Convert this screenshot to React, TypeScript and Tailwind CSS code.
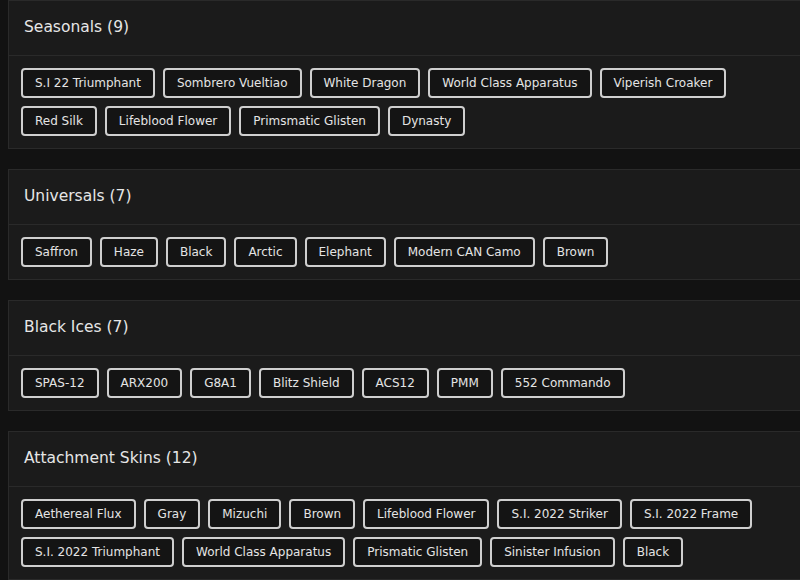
const sections: { title: string; items: string[] }[] = [
  {
    title: 'Seasonals',
    items: [
      'S.I 22 Triumphant',
      'Sombrero Vueltiao',
      'White Dragon',
      'World Class Apparatus',
      'Viperish Croaker',
      'Red Silk',
      'Lifeblood Flower',
      'Primsmatic Glisten',
      'Dynasty',
    ],
  },
  {
    title: 'Universals',
    items: ['Saffron', 'Haze', 'Black', 'Arctic', 'Elephant', 'Modern CAN Camo', 'Brown'],
  },
  {
    title: 'Black Ices',
    items: ['SPAS-12', 'ARX200', 'G8A1', 'Blitz Shield', 'ACS12', 'PMM', '552 Commando'],
  },
  {
    title: 'Attachment Skins',
    items: [
      'Aethereal Flux',
      'Gray',
      'Mizuchi',
      'Brown',
      'Lifeblood Flower',
      'S.I. 2022 Striker',
      'S.I. 2022 Frame',
      'S.I. 2022 Triumphant',
      'World Class Apparatus',
      'Prismatic Glisten',
      'Sinister Infusion',
      'Black',
    ],
  },
]

export default function App() {
  return (
    <div className="min-h-screen bg-[#121212] pl-2 overflow-hidden font-['DejaVu_Sans',sans-serif]">
      <div className="flex flex-col gap-5 -mr-1">
        {sections.map((s) => (
          <div key={s.title} className="bg-[#1b1b1b] border border-[#2a2a2a]">
            <div className="h-[55px] flex items-center pl-[15px] border-b border-[#2a2a2a]">
              <h2 className="text-[15.5px] text-[#e6e6e6] font-medium">
                {s.title} ({s.items.length})
              </h2>
            </div>
            <div className="flex flex-wrap gap-2 px-3 pt-3 pb-3">
              {s.items.map((item, i) => (
                <span
                  key={i}
                  className="h-[30px] flex items-center px-3 bg-[#141414] border-2 border-[#cfcfcf] rounded text-[12px] text-[#e4e4e4]"
                >
                  {item}
                </span>
              ))}
            </div>
          </div>
        ))}
      </div>
    </div>
  )
}
